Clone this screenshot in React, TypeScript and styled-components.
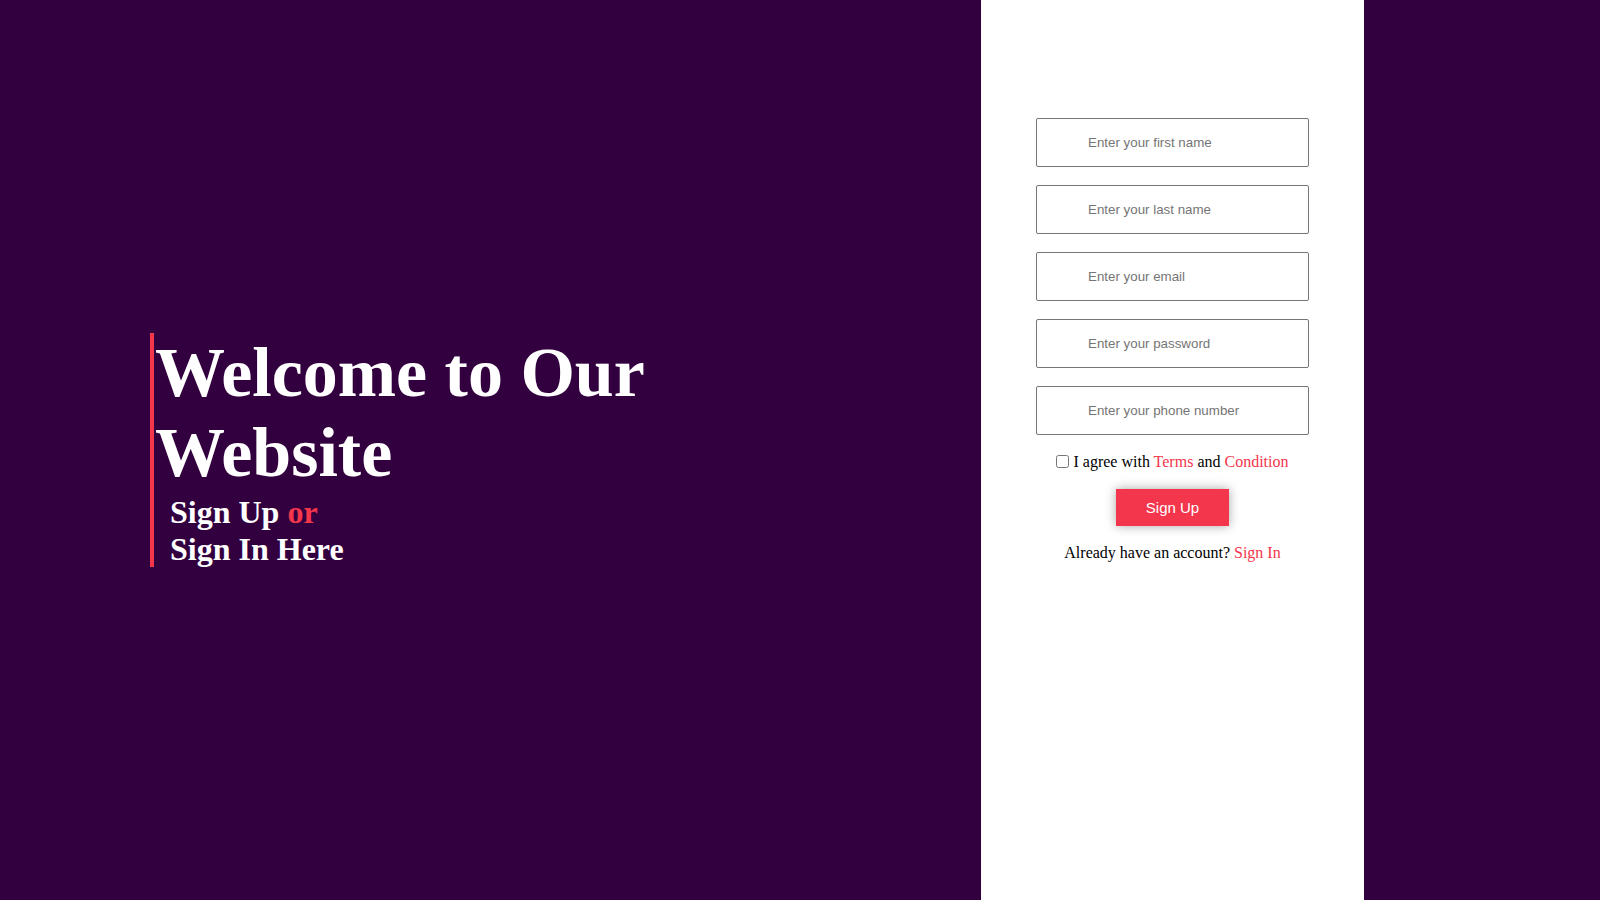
import React from "react";
import styled, { createGlobalStyle } from "styled-components";

const Global = createGlobalStyle`
  html, body { margin: 0; padding: 0; }
  body { background: #33003f; font-family: "Liberation Serif", "Times New Roman", serif; }
  * { box-sizing: border-box; }
`;

const Page = styled.div`
  display: grid;
  grid-template-columns: 981px 383px 1fr;
  height: 900px;
  background: #33003f;
`;

const Intro = styled.section`
  display: flex;
  flex-direction: column;
  justify-content: center;
  padding-left: 150px;
`;

const IntroBlock = styled.div`
  border-left: 4px solid #f4364c;
  padding-left: 1px;
  color: #ffffff;
`;

const Title = styled.h1`
  margin: 0;
  font-size: 70px;
  font-weight: 700;
  line-height: 1.15;
  width: 500px;
`;

const Sub = styled.h2`
  margin: 0 0 0 15px;
  font-size: 32px;
  font-weight: 700;
  line-height: 1.15;
`;

const Accent = styled.span`
  color: #f4364c;
`;

const FormPanel = styled.section`
  background: #ffffff;
  display: flex;
  flex-direction: column;
  align-items: center;
  padding-top: 118px;
`;

const Field = styled.input`
  width: 273px;
  height: 49px;
  margin: 0 0 18px 0;
  padding: 0 20px 0 51px;
  border: 1px solid #767676;
  border-radius: 2px;
  font-family: "Liberation Sans", Arial, sans-serif;
  font-size: 13.333px;
  color: #000;
  background: #fff;
  &::placeholder { color: #757575; }
`;

const AgreeRow = styled.label`
  display: flex;
  align-items: center;
  font-size: 16px;
  line-height: 18px;
  color: #000;
`;

const Check = styled.input`
  width: 13px;
  height: 13px;
  margin: 0 4px 2px 0;
`;

const RedText = styled.span`
  color: #f4364c;
`;

const SubmitButton = styled.button`
  margin-top: 18px;
  width: 113px;
  height: 37px;
  border: none;
  background: #f4364c;
  color: #ffffff;
  font-family: "Liberation Sans", Arial, sans-serif;
  font-size: 15px;
  box-shadow: 0 0 10px rgba(0, 0, 0, 0.35);
  cursor: pointer;
`;

const Footer = styled.p`
  margin: 18px 0 0 0;
  font-size: 16px;
  line-height: 18px;
  color: #000;
`;

const fields = [
  { type: "text", ph: "Enter your first name" },
  { type: "text", ph: "Enter your last name" },
  { type: "email", ph: "Enter your email" },
  { type: "password", ph: "Enter your password" },
  { type: "tel", ph: "Enter your phone number" },
];

export default function App() {
  return (
    <>
      <Global />
      <Page>
        <Intro>
          <IntroBlock>
            <Title>Welcome to Our Website</Title>
            <Sub>
              Sign Up <Accent>or</Accent>
            </Sub>
            <Sub>Sign In Here</Sub>
          </IntroBlock>
        </Intro>
        <FormPanel>
          {fields.map((f) => (
            <Field key={f.ph} type={f.type} placeholder={f.ph} />
          ))}
          <AgreeRow>
            <Check type="checkbox" />
            <span>
              I agree with <RedText>Terms</RedText> and <RedText>Condition</RedText>
            </span>
          </AgreeRow>
          <SubmitButton>Sign Up</SubmitButton>
          <Footer>
            Already have an account? <RedText>Sign In</RedText>
          </Footer>
        </FormPanel>
        <div />
      </Page>
    </>
  );
}
